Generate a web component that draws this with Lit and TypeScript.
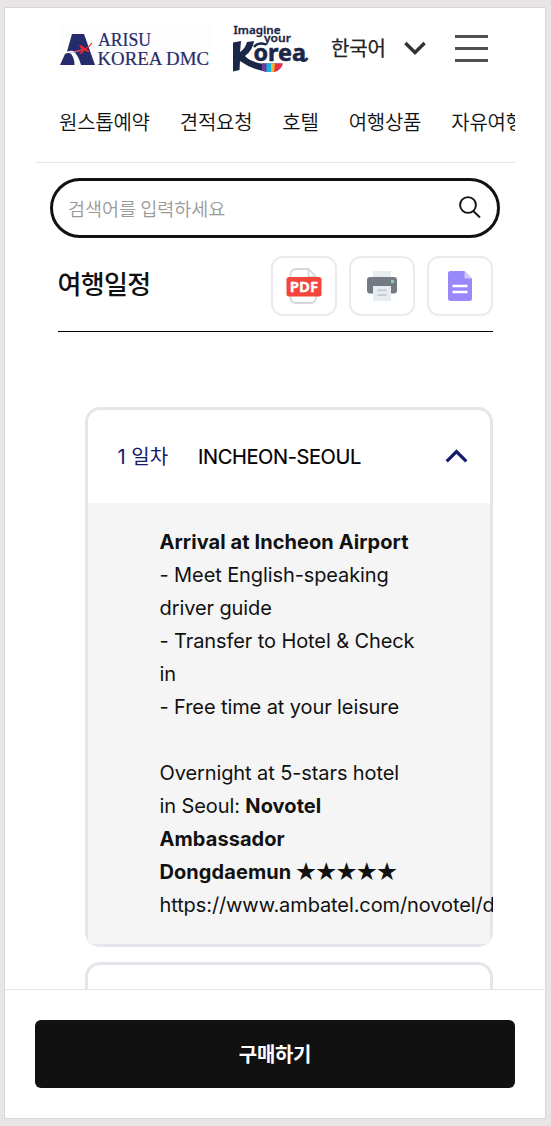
import { LitElement, html, css, svg } from "lit";
import { customElement, property } from "lit/decorators.js";

const arisuLogo = svg`
  <svg class="arisu" width="152" height="50" viewBox="0 0 152 50" role="img" aria-label="ARISU KOREA DMC">
    <rect width="152" height="50" fill="#fdfdfd"/>
    <path d="M13 11H25L36 42H22C20 35 18 31 14 28C12.500 27.400 10.500 27.800 8 28.500Z" fill="#262b6b"/>
    <path d="M6 31C8 29.500 11 29.500 12.500 31.500C14.500 34 15.500 38 15.500 42H1Z" fill="#262b6b"/>
    <path d="M9 29Q16 30 22 27" fill="none" stroke="#cdd0e4" stroke-width="1"/>
    <path d="M17 28.300Q28 27.500 33 20" fill="none" stroke="#ed2631" stroke-width="1.200"/>
    <path d="M20 22L22 22L26 25L31 28.500L29 29L25 27.500L22.500 31L21 31L22.500 26.500Z" fill="#ed2631"/>
    <g fill="#262b6b" stroke="#262b6b" stroke-width=".2" font-family="'Liberation Serif', serif" font-size="18.500">
      <text x="39" y="22.500" textLength="53" lengthAdjust="spacingAndGlyphs">ARISU</text>
      <text x="38.500" y="41.500" textLength="111.500" lengthAdjust="spacingAndGlyphs">KOREA DMC</text>
    </g>
  </svg>`;

const imagineLogo = svg`
  <svg class="imagine" width="80" height="52" viewBox="0 0 80 52" role="img" aria-label="Imagine your Korea">
    <g fill="#1b2747" stroke="#1b2747" font-family="'Noto Sans', sans-serif" font-weight="600">
      <text x="3.500" y="10.500" font-size="11.500" stroke-width=".3" textLength="47" lengthAdjust="spacingAndGlyphs">Imagine</text>
      <text x="34" y="19" font-size="11.500" stroke-width=".3" textLength="27" lengthAdjust="spacingAndGlyphs">your</text>
      <text x="23.500" y="38" font-size="24" font-weight="700" stroke-width=".6" textLength="52.500" lengthAdjust="spacingAndGlyphs">orea</text>
    </g>
    <path d="M3 19.500L11 18L10 29Q15 26 17 19L24 18Q23 27 15 33Q20 38.500 31 40.500L52 40.500Q49.500 49 41 49Q24 48 10 38L9.500 47L3 48.500Z" fill="#1b2747"/>
    <path d="M24 24Q28 18.500 36 21.500" fill="none" stroke="#1b2747" stroke-width="2.400"/>
    <path d="M32 40.500H37V48.800Q34 48.500 32 47.700Z" fill="#6c3b9b"/>
    <path d="M36.500 40.500H41V49Q38 49 36.500 48.700Z" fill="#13b6dd"/>
    <path d="M41 40.500H45V48.500Q43 49 41 49Z" fill="#f2b634"/>
    <path d="M45 40.500H53Q51 47.500 44 49Z" fill="#e72f4c"/>
    <path d="M71 36.500Q74.500 39.500 77.500 35" fill="none" stroke="#1b2747" stroke-width="2.800"/>
  </svg>`;

const pdfIcon = svg`
  <svg width="36" height="38" viewBox="0 0 36 38">
    <path d="M10 2H22.500L30 10V30Q30 36 24 36H10Q4.500 36 4.500 30V8Q4.500 2 10 2Z" fill="#fff" stroke="#d3d8de" stroke-width="1.800"/>
    <path d="M22.500 2V10H30" fill="none" stroke="#d3d8de" stroke-width="1.800"/>
    <rect x=".500" y="10" width="35" height="19.500" rx="2.500" fill="#f4453a"/>
    <text x="18" y="25.300" text-anchor="middle" textLength="28.500" lengthAdjust="spacingAndGlyphs" fill="#fff" stroke="#fff" stroke-width=".3" font-family="'Noto Sans', sans-serif" font-weight="700" font-size="15">PDF</text>
  </svg>`;

const printIcon = svg`
  <svg width="30" height="30" viewBox="0 0 30 30">
    <rect x="6" width="18" height="7" fill="#e6ecef"/>
    <path d="M3 6H27Q30 6 30 9V19.500Q30 22.500 27 22.500H3Q0 22.500 0 19.500V9Q0 6 3 6Z" fill="#737a84"/>
    <rect x="24" y="9" width="3" height="3" fill="#78d6b0"/>
    <path d="M6 15H24V30H6Z" fill="#e6ecef"/>
    <path d="M10.500 19.300H19.500M10.500 24H19.500" stroke="#c7ced3" stroke-width="2"/>
  </svg>`;

const docIcon = svg`
  <svg width="24" height="30" viewBox="0 0 24 30">
    <path d="M2.500 0H16.500L24 7.500V27.500Q24 30 21.500 30H2.500Q0 30 0 27.500V2.500Q0 0 2.500 0Z" fill="#9888f9"/>
    <path d="M16.500 0L24 7.500H16.500Z" fill="#cfc8fd"/>
    <path d="M4.500 15H19.500M4.500 21H19.500" stroke="#fff" stroke-width="2.600"/>
  </svg>`;

@customElement("day-card")
class DayCard extends LitElement {
  @property() day = "";
  @property() route = "";
  @property({ type: Boolean }) open = false;

  static styles = css`
    :host { display: block; box-sizing: border-box; border: 3px solid #e5e5ec; border-radius: 15px; background: #fff; }
    .head { display: flex; align-items: center; box-sizing: border-box; height: 93px; padding: 0 22px 0 29.500px; }
    .day { width: 80.500px; color: #121a6b; font: 400 20px/30px Inter, "Noto Sans CJK KR", sans-serif; letter-spacing: 0; white-space: nowrap; }
    .route { flex: 1; color: #000; font: 400 20px/30px Inter, sans-serif; letter-spacing: -.38px; -webkit-text-stroke: .2px #000; }
    .head svg { margin-top: -2px; }
    .content { box-sizing: border-box; height: 441px; padding: 23px 72px 0; background: #f5f5f5; }
  `;

  render() {
    return html`
      <div class="head">
        <span class="day">${this.day}</span>
        <span class="route">${this.route}</span>
        <svg width="23" height="14" viewBox="0 0 23 14"><path d="M1.700 12.300L11.500 2.500L21.300 12.300" fill="none" stroke="#121a6b" stroke-width="3.200"/></svg>
      </div>
      ${this.open ? html`<div class="content"><slot></slot></div>` : null}
    `;
  }
}

@customElement("app-root")
class AppRoot extends LitElement {
  static styles = css`
    :host { display: block; box-sizing: border-box; height: 1126px; padding: 7px 5px 7px 4px; overflow: hidden; background: #e9e4e6; color: #111; font-family: "Noto Sans CJK KR", sans-serif; }
    .phone { display: flex; flex-direction: column; box-sizing: border-box; height: 1112px; border: 1px solid #dad7da; background: #fff; overflow: hidden; }
    .top { display: flex; align-items: flex-start; height: 80px; padding: 0 30px; box-sizing: border-box; flex: none; }
    .arisu { margin: 15px 0 0 24px; flex: none; }
    .imagine { margin: 15px 0 0 19px; flex: none; overflow: visible; }
    .lang { margin: 25px 0 0 21px; width: 73px; font-size: 20px; line-height: 30px; letter-spacing: -.2px; white-space: nowrap; color: #222; -webkit-text-stroke: .25px #222; }
    .down { margin-top: 33px; flex: none; }
    .burger { display: flex; flex-direction: column; justify-content: space-between; width: 33px; height: 27px; margin: 27px 0 0 29px; }
    .burger i { height: 3px; background: #505050; }
    .nav { display: flex; gap: 30px; flex: none; box-sizing: border-box; height: 75px; margin: 0 30px; padding: 19px 0 0 24px; border-bottom: 1px solid #e5e5e5; overflow: hidden; white-space: nowrap; font-size: 20px; line-height: 30px; font-weight: 350; letter-spacing: -.25px; }
    .nav span { flex: none; }
    .search { display: flex; align-items: center; justify-content: space-between; flex: none; box-sizing: border-box; height: 60px; margin: 15px 45px 0; padding: 0 16px 0 15px; border: 3px solid #111; border-radius: 30px; color: #999; font-size: 18.500px; font-weight: 350; }
    .search svg { margin-top: -2px; }
    .title { display: flex; flex: none; align-items: flex-start; box-sizing: border-box; height: 94px; margin: 0 52px 0 53px; padding-top: 18px; border-bottom: 1px solid #000; }
    .title h2 { flex: 1; margin: 8px 0 0 -.5px; font-size: 26px; line-height: 38px; font-weight: 500; letter-spacing: -.7px; }
    .tools { display: flex; gap: 12px; }
    .tool { display: flex; align-items: center; justify-content: center; box-sizing: border-box; width: 66px; height: 60px; border: 2px solid #ebeaf1; border-radius: 12px; }
    .list { display: flex; flex-direction: column; gap: 15px; flex: 1; min-height: 0; margin: 75px 52px 0 80px; overflow: hidden; }
    .list day-card { flex: none; }
    .plan { margin-left: -.5px; font: 400 20px/33px Inter, sans-serif; letter-spacing: -.1px; }
    .plan b { font-weight: 700; letter-spacing: .07px; }
    .line { display: block; min-height: 33px; white-space: nowrap; }
    .stars { font-family: "Noto Sans CJK KR", sans-serif; line-height: 1; letter-spacing: .2px; }
    .buy { flex: none; box-sizing: border-box; height: 129px; padding: 30px; border-top: 1px solid #e5e5e5; background: #fff; }
    .buy button { display: block; width: 100%; height: 68px; padding: 0; border: 0; border-radius: 6px; background: #111; color: #fff; font: 700 20px/66px "Noto Sans CJK KR", sans-serif; letter-spacing: -.3px; }
  `;

  private menu = ["원스톱예약", "견적요청", "호텔", "여행상품", "자유여행"];

  render() {
    return html`
      <main class="phone">
        <header class="top">
          ${arisuLogo}${imagineLogo}
          <span class="lang">한국어</span>
          <svg class="down" width="22" height="15" viewBox="0 0 22 15"><path d="M1.400 2L11 11.500L20.600 2" fill="none" stroke="#333" stroke-width="3.400"/></svg>
          <div class="burger"><i></i><i></i><i></i></div>
        </header>
        <nav class="nav">${this.menu.map((m) => html`<span>${m}</span>`)}</nav>
        <div class="search">
          <span>검색어를 입력하세요</span>
          <svg width="22" height="22" viewBox="0 0 22 22" fill="none" stroke="#111" stroke-width="1.900"><circle cx="9" cy="9" r="7.900"/><path d="M14.200 15L21 21.500"/></svg>
        </div>
        <section class="title">
          <h2>여행일정</h2>
          <div class="tools">
            <div class="tool">${pdfIcon}</div>
            <div class="tool">${printIcon}</div>
            <div class="tool">${docIcon}</div>
          </div>
        </section>
        <section class="list">
          <day-card open day="1 일차" route="INCHEON-SEOUL">
            <div class="plan">
              <b class="line">Arrival at Incheon Airport</b>
              <span class="line">- Meet English-speaking</span>
              <span class="line">driver guide</span>
              <span class="line">- Transfer to Hotel &amp; Check</span>
              <span class="line">in</span>
              <span class="line">- Free time at your leisure</span>
              <span class="line"></span>
              <span class="line">Overnight at 5-stars hotel</span>
              <span class="line">in Seoul: <b>Novotel</b></span>
              <b class="line">Ambassador</b>
              <b class="line">Dongdaemun <span class="stars">★★★★★</span></b>
              <span class="line">https://www.ambatel.com/novotel/dongdaemun</span>
            </div>
          </day-card>
          <day-card></day-card>
        </section>
        <footer class="buy"><button>구매하기</button></footer>
      </main>
    `;
  }
}
